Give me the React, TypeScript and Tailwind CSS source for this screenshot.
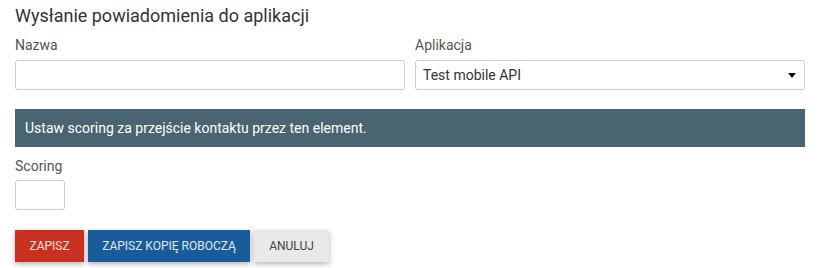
export default function App() {
  return (
    <div className="w-[833px] h-[268px] bg-white font-['Roboto',sans-serif] overflow-hidden">
      <div className="ml-[15px] w-[790px] pt-[4px]">
        <h3 className="text-[18px] leading-[24px] text-[#333] font-normal">
          Wysłanie powiadomienia do aplikacji
        </h3>

        <div className="grid grid-cols-2 gap-x-[10px] mt-[7px]">
          <div>
            <label className="block text-[14px] leading-[20px] text-[#555]">Nazwa</label>
            <input
              type="text"
              className="mt-[5px] block w-full h-[30px] border border-[#ccc] rounded-[3px] px-[7px] text-[14px] text-[#333] outline-none"
            />
          </div>
          <div>
            <label className="block text-[14px] leading-[20px] text-[#555]">Aplikacja</label>
            <div className="mt-[5px] flex items-center justify-between h-[30px] border border-[#ccc] rounded-[3px] pl-[7px] pr-[8px] text-[14px] text-[#333]">
              <span>Test mobile API</span>
              <svg width="8" height="5" viewBox="0 0 8 5" className="mt-[1px]">
                <path d="M0 0h8L4 5z" fill="#111" />
              </svg>
            </div>
          </div>
        </div>

        <div className="mt-[19px] bg-[#4a6572] text-white text-[14px] leading-[20px] px-[10px] py-[9px]">
          Ustaw scoring za przejście kontaktu przez ten element.
        </div>

        <label className="block mt-[9px] text-[14px] leading-[20px] text-[#555]">Scoring</label>
        <input
          type="text"
          className="mt-[4px] block w-[50px] h-[30px] border border-[#ccc] rounded-[3px] px-[5px] text-[14px] outline-none"
        />

        <div className="flex gap-[4px] mt-[20px]">
          <button className="h-[32px] w-[69px] bg-[#c9301f] text-white/85 text-[12px] uppercase shadow-[0_2px_5px_0_rgba(0,0,0,0.3)]">
            Zapisz
          </button>
          <button className="h-[32px] w-[162px] bg-[#195c9c] text-white/85 text-[12px] uppercase shadow-[0_2px_5px_0_rgba(0,0,0,0.3)]">
            Zapisz kopię roboczą
          </button>
          <button className="h-[32px] w-[75px] bg-[#e9e9e9] text-[#444] text-[12px] uppercase shadow-[0_2px_5px_0_rgba(0,0,0,0.3)]">
            Anuluj
          </button>
        </div>
      </div>
    </div>
  );
}
